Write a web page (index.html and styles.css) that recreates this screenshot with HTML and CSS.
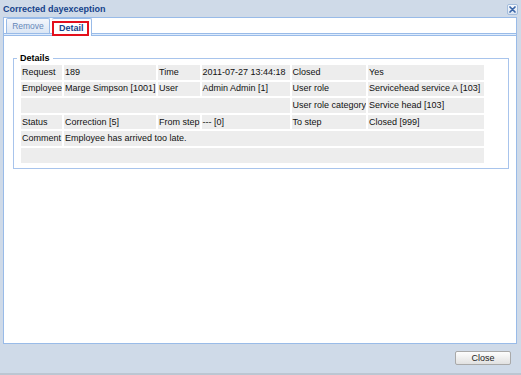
FILE: index.html
```html
<!DOCTYPE html>
<html lang="en">
<head>
  <meta charset="UTF-8" />
  <title>Corrected dayexception</title>
  <link rel="stylesheet" href="styles.css">
</head>
<body>
  <div class="window">
    <div class="win-header">
      <span class="win-title">Corrected dayexception</span>
      <span class="tool-close">
        <svg width="9" height="9" viewBox="0 0 9 9"><path d="M2 2 L7 7 M7 2 L2 7" stroke="#3b66a8" stroke-width="1.7" stroke-linecap="round"/></svg>
      </span>
    </div>

    <div class="tabpanel">
      <div class="tabstrip">
        <div class="tab">Remove</div>
        <div class="tab active"><span class="hl">Detail</span></div>
      </div>
      <div class="strip-spacer"></div>

      <div class="tab-body">
        <fieldset class="details">
          <legend>Details</legend>
          <table class="grid">
            <colgroup>
              <col class="c1">
              <col class="c2">
              <col class="c3">
              <col class="c4">
              <col class="c5">
              <col class="c6">
            </colgroup>
            <tr>
              <td>Request</td><td>189</td>
              <td>Time</td><td>2011-07-27 13:44:18</td>
              <td>Closed</td><td>Yes</td>
            </tr>
            <tr>
              <td>Employee</td><td>Marge Simpson [1001]</td>
              <td>User</td><td>Admin Admin [1]</td>
              <td>User role</td><td>Servicehead service A [103]</td>
            </tr>
            <tr>
              <td colspan="4"></td>
              <td>User role category</td><td>Service head [103]</td>
            </tr>
            <tr>
              <td>Status</td><td>Correction [5]</td>
              <td>From step</td><td>--- [0]</td>
              <td>To step</td><td>Closed [999]</td>
            </tr>
            <tr>
              <td>Comment</td><td colspan="5">Employee has arrived too late.</td>
            </tr>
            <tr>
              <td colspan="6"></td>
            </tr>
          </table>
        </fieldset>
      </div>
    </div>

    <div class="win-footer">
      <button class="btn">Close</button>
    </div>
  </div>
</body>
</html>
```

FILE: styles.css
```css
body {
  margin: 0;
  font-family: "Liberation Sans", Arial, sans-serif;
  font-size: 9px;
  color: #000;
}

.window {
  width: 521px;
  height: 375px;
  box-sizing: border-box;
  background-color: #cfdae8;
  border-bottom: 2px solid #bcc6d2;
  display: flex;
  flex-direction: column;
}

/* header */
.win-header {
  height: 17px;
  display: flex;
  align-items: center;
  justify-content: space-between;
  padding: 0 3px 0 3px;
  flex-shrink: 0;
}

.win-title {
  font-weight: bold;
  color: #15428b;
}

.tool-close {
  width: 11px;
  height: 11px;
  box-sizing: border-box;
  border: 1px solid #a3bcdc;
  border-radius: 2px;
  background: linear-gradient(#f6f9fd, #dae5f3);
  display: flex;
  align-items: center;
  justify-content: center;
  margin-top: 1px;
}

/* tabs */
.tabpanel {
  flex: 1;
  margin: 0 4px 0 3px;
  border: 1px solid #99bbe8;
  display: flex;
  flex-direction: column;
  background: #fff;
}

.tabstrip {
  height: 15px;
  display: flex;
  align-items: flex-start;
  gap: 2px;
  padding-left: 2px;
}

.tab {
  height: 15px;
  box-sizing: border-box;
  border: 1px solid #99bbe8;
  border-bottom: none;
  border-radius: 2px 2px 0 0;
  background: linear-gradient(#f3f6fb, #dbe6f4);
  color: #6688b8;
  font-size: 8.5px;
  line-height: 14px;
  width: 44px;
  text-align: center;
}

.tab.active {
  position: relative;
  z-index: 1;
  width: 40px;
  height: 18px;
  background: #fff;
  border-left: none;
  text-align: left;
  color: #15428b;
  font-weight: bold;
  font-size: 9px;
}

.hl {
  display: block;
  width: 37px;
  height: 15px;
  box-sizing: border-box;
  margin-top: 2px;
  border: 2px solid #e3101c;
  padding-left: 5px;
  line-height: 11px;
}

.strip-spacer {
  height: 1px;
  background: #deecfd;
  border-top: 1px solid #99bbe8;
  border-bottom: 1px solid #99bbe8;
  flex-shrink: 0;
}

.tab-body {
  flex: 1;
  background: #fff;
  padding: 16px 7px 0 9px;
}

/* fieldset */
.details {
  margin: 0;
  border: 1px solid #a8c4ec;
  padding: 0 4px 3px 5px;
}

.details legend {
  font-weight: bold;
  color: #000;
  padding: 0 3px;
  margin-left: -2px;
  line-height: 12px;
}

.grid {
  border-spacing: 2px;
  table-layout: fixed;
  margin-top: -1px;
}

.c1 { width: 38px; }
.c2 { width: 92px; }
.c3 { width: 41px; }
.c4 { width: 88px; }
.c5 { width: 74px; }
.c6 { width: 116px; }

.grid td {
  background: #ededed;
  height: 14.6px;
  padding: 0 0 0 1px;
  white-space: nowrap;
  overflow: hidden;
  line-height: 11px;
  color: #111;
}

/* footer */
.win-footer {
  height: 29px;
  flex-shrink: 0;
  display: flex;
  justify-content: flex-end;
  align-items: flex-start;
  padding: 7px 10px 0 0;
  box-sizing: border-box;
}

.btn {
  width: 56px;
  height: 14px;
  border: 1px solid #a9a9a9;
  border-radius: 2px;
  background: linear-gradient(#fdfdfd, #efefef 50%, #e1e1e1);
  font-family: "Liberation Sans", Arial, sans-serif;
  font-size: 9px;
  color: #222;
  padding: 0;
  line-height: 12px;
}
```
